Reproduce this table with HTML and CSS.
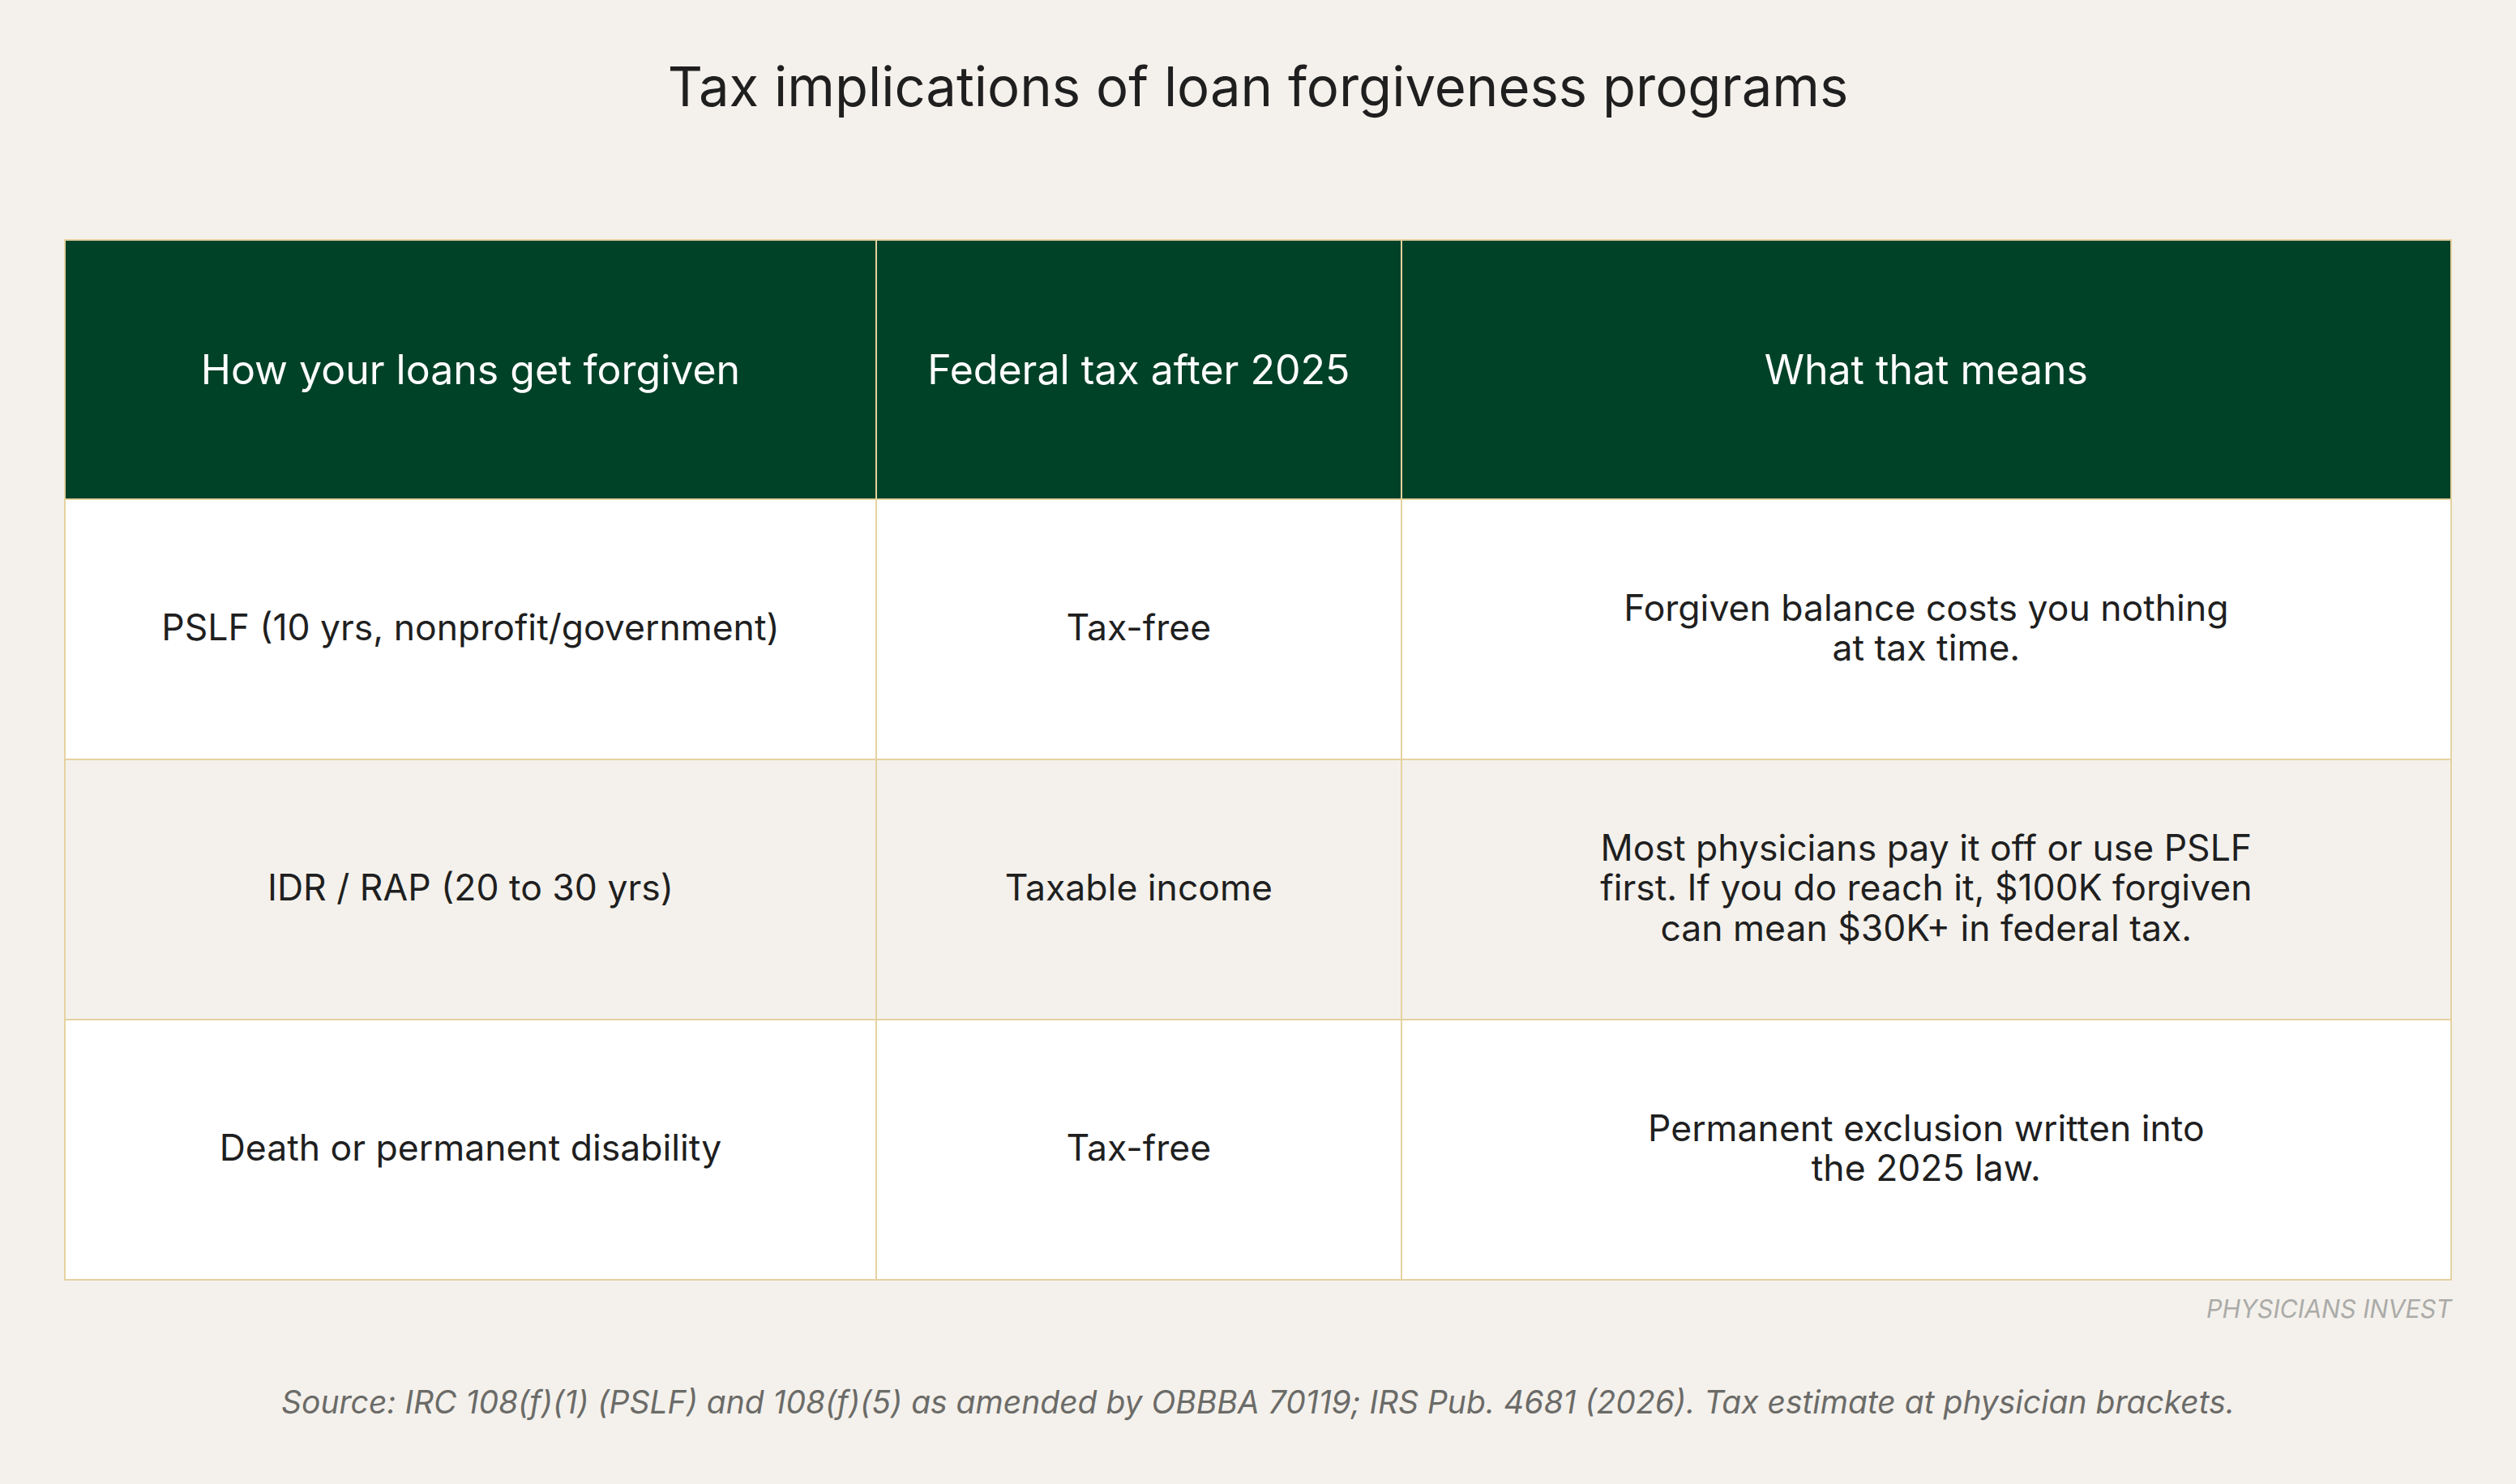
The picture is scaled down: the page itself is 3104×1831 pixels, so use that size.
FILE: index.html
```html
<!DOCTYPE html>
<html lang="en">
<head>
<meta charset="utf-8">
<title>Tax implications of loan forgiveness programs</title>
<link rel="stylesheet" href="styles.css">
</head>
<body>
<main class="page">
  <h1 class="title">Tax implications of loan forgiveness programs</h1>
  <table class="grid">
    <colgroup>
      <col class="c1">
      <col class="c2">
      <col class="c3">
    </colgroup>
    <thead>
      <tr>
        <th>How your loans get forgiven</th>
        <th>Federal tax after 2025</th>
        <th>What that means</th>
      </tr>
    </thead>
    <tbody>
      <tr>
        <td>PSLF (10 yrs, nonprofit/government)</td>
        <td>Tax-free</td>
        <td><div class="note">Forgiven balance costs you nothing<br>at tax time.</div></td>
      </tr>
      <tr class="alt">
        <td>IDR / RAP (20 to 30 yrs)</td>
        <td>Taxable income</td>
        <td><div class="note">Most physicians pay it off or use PSLF<br>first. If you do reach it, $100K forgiven<br>can mean $30K+ in federal tax.</div></td>
      </tr>
      <tr>
        <td>Death or permanent disability</td>
        <td>Tax-free</td>
        <td><div class="note">Permanent exclusion written into<br>the 2025 law.</div></td>
      </tr>
    </tbody>
  </table>
  <div class="brand">PHYSICIANS INVEST</div>
  <p class="source">Source: IRC 108(f)(1) (PSLF) and 108(f)(5) as amended by OBBBA 70119; IRS Pub. 4681 (2026). Tax estimate at physician brackets.</p>
</main>
</body>
</html>
```

FILE: styles.css
```css
html, body {
  margin: 0;
  padding: 0;
  background: #f4f1ec;
}

body {
  font-family: Inter, "Noto Sans", "Liberation Sans", sans-serif;
  color: #1f1f1f;
}

.page {
  display: flex;
  flex-direction: column;
  padding: 67px 79px 0;
}

.title {
  margin: 0;
  font-size: 67px;
  line-height: 1.2;
  font-weight: 400;
  text-align: center;
  color: #1f1f1f;
}

.grid {
  margin-top: 148px;
  width: 100%;
  border-collapse: collapse;
  table-layout: fixed;
  border: 2px solid #e5d2a0;
}

.c1 { width: 34%; }
.c2 { width: 22%; }
.c3 { width: 44%; }

.grid th,
.grid td {
  border: 2px solid #e5d2a0;
  padding: 0 24px;
  text-align: center;
  vertical-align: middle;
  line-height: 1.12;
}

.grid th {
  height: 318px;
  background: #004228;
  color: #ffffff;
  font-size: 50px;
  font-weight: 400;
}

.grid td {
  height: 316px;
  padding-bottom: 3px;
  background: #ffffff;
  font-size: 44.5px;
  color: #1f1f1f;
}

.grid tr.alt td {
  background: #f4f1ec;
}

.note {
  margin: 0 auto;
  white-space: nowrap;
}

.brand {
  margin-top: 17px;
  align-self: flex-end;
  font-size: 30.5px;
  line-height: 1.2;
  font-style: italic;
  color: #ababa8;
}

.source {
  margin: 73px 0 0;
  text-align: center;
  font-size: 39px;
  line-height: 1.2;
  font-style: italic;
  color: #6b6b68;
}
```
